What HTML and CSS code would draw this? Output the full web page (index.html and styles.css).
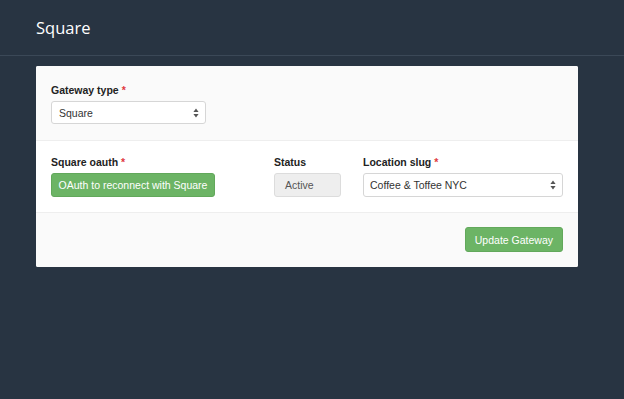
FILE: index.html
```html
<!DOCTYPE html>
<html lang="en">
<head>
    <meta charset="UTF-8">
    <meta name="viewport" content="width=device-width, initial-scale=1.0">
    <title>Square</title>
    <link rel="stylesheet" href="styles.css">
</head>
<body>
    <header class="topbar">
        <h1>Square</h1>
    </header>

    <main class="content">
        <div class="card">
            <div class="section section-grey">
                <label class="label">Gateway type <span class="req">*</span></label>
                <div class="select select-small">
                    <span>Square</span>
                    <svg width="6" height="10" viewBox="0 0 6 10"><path d="M3 0.5 L5.6 4 L0.4 4 Z M3 9.5 L5.6 6 L0.4 6 Z" fill="#555"/></svg>
                </div>
            </div>

            <div class="section section-row">
                <div class="field field-oauth">
                    <label class="label">Square oauth <span class="req">*</span></label>
                    <button class="btn btn-wide">OAuth to reconnect with Square</button>
                </div>
                <div class="field field-status">
                    <label class="label">Status</label>
                    <div class="status">Active</div>
                </div>
                <div class="field field-location">
                    <label class="label">Location slug <span class="req">*</span></label>
                    <div class="select">
                        <span>Coffee &amp; Toffee NYC</span>
                        <svg width="6" height="10" viewBox="0 0 6 10"><path d="M3 0.5 L5.6 4 L0.4 4 Z M3 9.5 L5.6 6 L0.4 6 Z" fill="#555"/></svg>
                    </div>
                </div>
            </div>

            <div class="section section-grey section-footer">
                <button class="btn">Update Gateway</button>
            </div>
        </div>
    </main>
</body>
</html>
```

FILE: styles.css
```css
body {
    margin: 0;
    background-color: #283442;
    font-family: "Liberation Sans", Arial, sans-serif;
    color: #333;
    height: 399px;
}

.topbar {
    height: 55px;
    border-bottom: 1px solid #3b4857;
    padding: 0 36px;
    display: flex;
    align-items: center;
}

.topbar h1 {
    margin: 0;
    color: #fff;
    font-family: "Open Sans", sans-serif;
    font-weight: 500;
    font-size: 16.5px;
    padding-bottom: 1px;
}

.content {
    padding: 10px 46px 0 36px;
}

.card {
    width: 542px;
    background: #fff;
    border-radius: 2px;
    overflow: hidden;
}

.section {
    padding: 18px 15px 16px;
    border-bottom: 1px solid #eeeeee;
}

.section-grey {
    background: #fafafa;
}

.section-row {
    display: grid;
    grid-template-columns: 223px 89px 200px;
    padding-top: 15px;
    padding-bottom: 15px;
}

.section-footer {
    border-bottom: none;
    display: flex;
    justify-content: flex-end;
    padding-top: 14px;
    padding-bottom: 15px;
}

.label {
    display: block;
    font-size: 10.5px;
    font-weight: bold;
    color: #222;
    line-height: 13px;
    margin-bottom: 4px;
}

.req {
    color: #e0383e;
}

.select {
    box-sizing: border-box;
    height: 24px;
    border: 1px solid #d6d6d6;
    border-radius: 3px;
    background: #fff;
    display: flex;
    align-items: center;
    justify-content: space-between;
    padding: 0 6px 0 6px;
    font-size: 10.5px;
    color: #333;
}

.select-small {
    width: 155px;
    height: 23px;
    padding-left: 7px;
}

.status {
    box-sizing: border-box;
    width: 67px;
    height: 24px;
    background: #eeeeee;
    border: 1px solid #dcdcdc;
    border-radius: 3px;
    font-size: 10.5px;
    color: #555;
    display: flex;
    align-items: center;
    padding-left: 10px;
}

.btn {
    box-sizing: border-box;
    height: 25px;
    padding: 0 9px;
    background-color: #6cb465;
    border: 1px solid #62a85b;
    border-radius: 3px;
    color: #fff;
    font-family: "Liberation Sans", Arial, sans-serif;
    font-size: 10.5px;
}

.btn-wide {
    width: 164px;
    height: 24px;
    padding: 0;
}
```
